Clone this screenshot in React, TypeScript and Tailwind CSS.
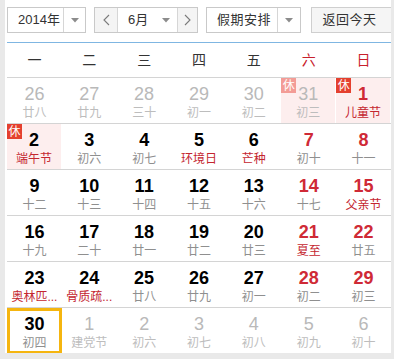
import React from 'react';

type Cell = {
  d: number;
  l: string;
  other?: boolean;
  red?: boolean;
  lred?: boolean;
  rest?: boolean;
  today?: boolean;
};

const weekdays = ['一', '二', '三', '四', '五', '六', '日'];

const cells: Cell[] = [
  { d: 26, l: '廿八', other: true },
  { d: 27, l: '廿九', other: true },
  { d: 28, l: '三十', other: true },
  { d: 29, l: '初一', other: true },
  { d: 30, l: '初二', other: true },
  { d: 31, l: '初三', other: true, rest: true },
  { d: 1, l: '儿童节', red: true, lred: true, rest: true },

  { d: 2, l: '端午节', lred: true, rest: true },
  { d: 3, l: '初六' },
  { d: 4, l: '初七' },
  { d: 5, l: '环境日', lred: true },
  { d: 6, l: '芒种', lred: true },
  { d: 7, l: '初十', red: true },
  { d: 8, l: '十一', red: true },

  { d: 9, l: '十二' },
  { d: 10, l: '十三' },
  { d: 11, l: '十四' },
  { d: 12, l: '十五' },
  { d: 13, l: '十六' },
  { d: 14, l: '十七', red: true },
  { d: 15, l: '父亲节', red: true, lred: true },

  { d: 16, l: '十九' },
  { d: 17, l: '二十' },
  { d: 18, l: '廿一' },
  { d: 19, l: '廿二' },
  { d: 20, l: '廿三' },
  { d: 21, l: '夏至', red: true, lred: true },
  { d: 22, l: '廿五', red: true },

  { d: 23, l: '奥林匹...', lred: true },
  { d: 24, l: '骨质疏...', lred: true },
  { d: 25, l: '廿八' },
  { d: 26, l: '廿九' },
  { d: 27, l: '初一' },
  { d: 28, l: '初二', red: true },
  { d: 29, l: '初三', red: true },

  { d: 30, l: '初四', today: true },
  { d: 1, l: '建党节', other: true },
  { d: 2, l: '初六', other: true },
  { d: 3, l: '初七', other: true },
  { d: 4, l: '初八', other: true },
  { d: 5, l: '初九', other: true },
  { d: 6, l: '初十', other: true },
];

function Caret() {
  return (
    <svg width="8" height="5" viewBox="0 0 8 5">
      <path d="M0 0 L8 0 L4 4.5 Z" fill="#8c8c8c" />
    </svg>
  );
}

function Chevron({ dir }: { dir: 'left' | 'right' }) {
  return (
    <svg width="7" height="12" viewBox="0 0 7 12">
      <path
        d={dir === 'left' ? 'M6 1 L1 6 L6 11' : 'M1 1 L6 6 L1 11'}
        fill="none"
        stroke="#7a7a7a"
        strokeWidth="1.1"
      />
    </svg>
  );
}

function DayCell({ c }: { c: Cell }) {
  let numColor = 'text-black font-bold';
  if (c.other) numColor = 'text-[#b9b9b9] font-normal';
  else if (c.red) numColor = 'text-[#cf2a36] font-bold';

  let lunarColor = 'text-[#8f8f8f]';
  if (c.other) lunarColor = 'text-[#bdbdbd]';
  else if (c.lred) lunarColor = 'text-[#c4262f]';

  return (
    <div
      className={`relative flex flex-col items-center ${c.rest ? 'bg-[#fdeeee] mr-[1px]' : ''} ${
        c.today ? 'border-[3px] border-[#f5b50f] mb-[1px]' : ''
      }`}
    >
      {c.rest && (
        <span
          className={`absolute left-0 top-0 flex h-[15px] w-[15px] items-center justify-center text-[12px] leading-none text-white ${
            c.other ? 'bg-[#f39c96]' : 'bg-[#e4402f]'
          }`}
        >
          休
        </span>
      )}
      <div
        className={`${c.today ? 'mt-[3px]' : 'mt-[6px]'} h-[20px] text-[18px] leading-[20px] font-['Liberation_Sans',Arial,sans-serif] ${numColor}`}
      >
        {c.d}
      </div>
      <div className={`mt-[1px] h-[16px] text-[12px] leading-[16px] whitespace-nowrap ${lunarColor}`}>{c.l}</div>
    </div>
  );
}

export default function App() {
  const rows: Cell[][] = [];
  for (let i = 0; i < cells.length; i += 7) rows.push(cells.slice(i, i + 7));

  return (
    <div className="w-[394px] h-[359px] bg-[#e9e9e9] pl-[5px] pr-[3px] pb-[6px] font-['Liberation_Sans','Noto_Sans_CJK_SC',sans-serif]">
      <div className="h-full overflow-hidden bg-white pl-[2px] pt-[7px]">
        {/* top controls */}
        <div className="flex h-[26px] whitespace-nowrap text-[13px] text-[#333]">
          <div className="flex w-[79px] border border-[#c9c9c9] bg-white">
            <div className="flex w-[55px] items-center pl-[10px]">2014年</div>
            <div className="flex flex-1 items-center justify-center border-l border-[#d6d6d6]">
              <Caret />
            </div>
          </div>

          <div className="ml-[8px] flex w-[104px] border border-[#c9c9c9] bg-white">
            <div className="flex w-[22px] items-center justify-center bg-[#f4f4f4]">
              <Chevron dir="left" />
            </div>
            <div className="flex w-[61px] items-center border-x border-[#d6d6d6] pl-[10px]">
              <span>6月</span>
              <span className="ml-[14px] flex">
                <Caret />
              </span>
            </div>
            <div className="flex flex-1 items-center justify-center bg-[#f4f4f4]">
              <Chevron dir="right" />
            </div>
          </div>

          <div className="ml-[8px] flex w-[95px] border border-[#c9c9c9] bg-white">
            <div className="flex w-[70px] items-center pl-[10px] tracking-[0.5px]">假期安排</div>
            <div className="flex flex-1 items-center justify-center border-l border-[#d6d6d6]">
              <Caret />
            </div>
          </div>

          <div className="ml-[10px] flex flex-1 items-center justify-center border border-r-0 border-[#cfcfcf] bg-[#f5f5f5] pr-[4px] tracking-[0.5px]">
            返回今天
          </div>
        </div>

        {/* calendar */}
        <div className="mt-[9px] border-t border-[#7fb6e2]">
          <div className="grid h-[35px] grid-cols-7 border-b border-[#d4d4d4] text-[14px]">
            {weekdays.map((w, i) => (
              <div
                key={w}
                className={`flex items-center justify-center ${i >= 5 ? 'text-[#c8202c]' : 'text-[#333]'}`}
              >
                {w}
              </div>
            ))}
          </div>
          {rows.map((row, ri) => (
            <div
              key={ri}
              className={`grid grid-cols-7 ${ri < rows.length - 1 ? 'h-[46px] border-b border-[#d4d4d4]' : 'h-[45px]'}`}
            >
              {row.map((c, ci) => (
                <DayCell key={ci} c={c} />
              ))}
            </div>
          ))}
        </div>
      </div>
    </div>
  );
}
